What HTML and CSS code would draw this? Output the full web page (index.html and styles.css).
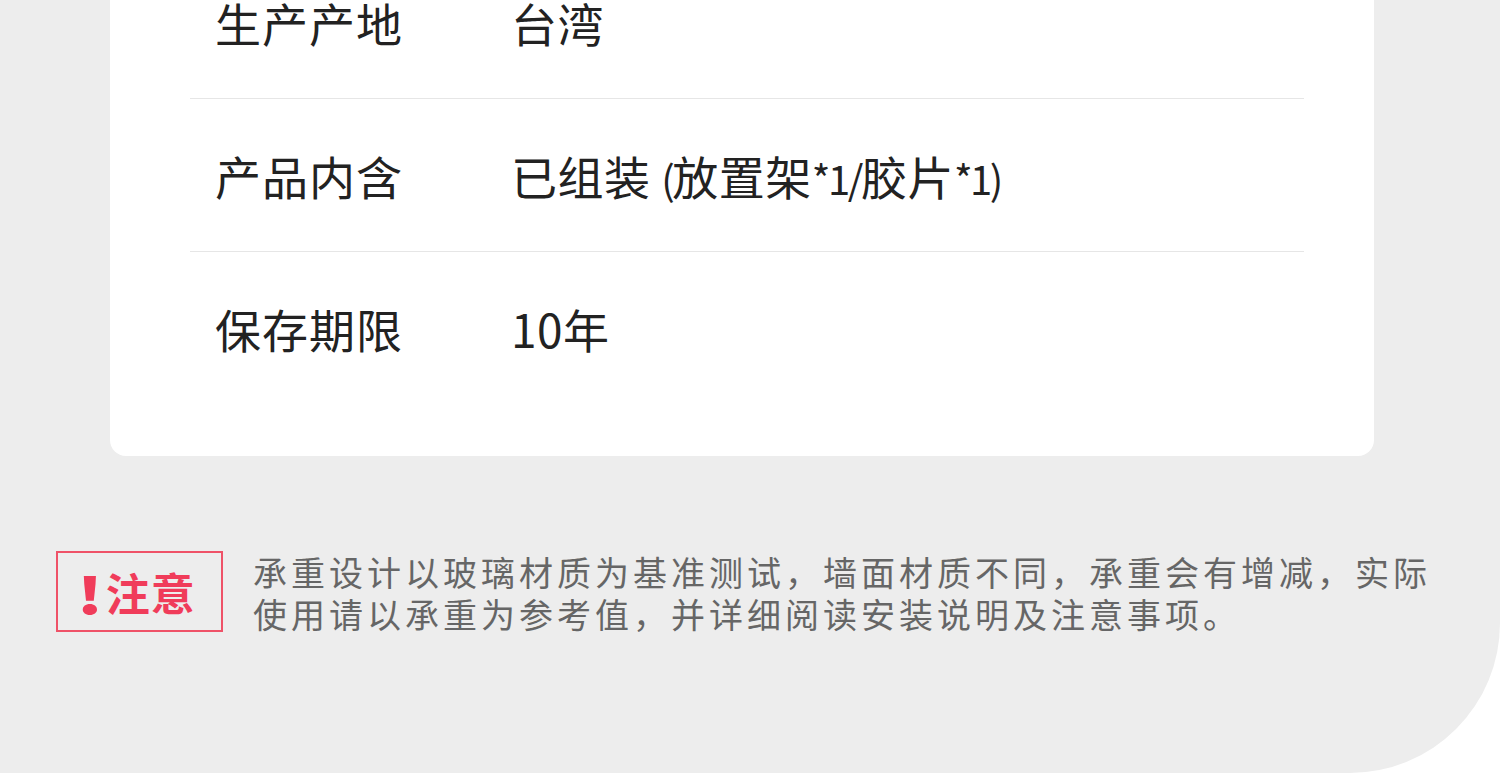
FILE: index.html
```html
<!DOCTYPE html>
<html lang="zh-CN">
<head>
<meta charset="utf-8">
<title>产品参数</title>
<link rel="stylesheet" href="styles.css">
</head>
<body>
<div class="page">
  <div class="card">
    <div class="row"><span class="label">生产产地</span><span class="value">台湾</span></div>
    <div class="row"><span class="label">产品内含</span><span class="value">已组装 <span class="lat">(</span>放置架<span class="lat">*1/</span>胶片<span class="lat">*1)</span></span></div>
    <div class="row"><span class="label">保存期限</span><span class="value">10年</span></div>
  </div>
  <div class="notice">
    <div class="badge"><span class="bang">!</span><span class="badge-text">注意</span></div>
    <p class="notice-text">承重设计以玻璃材质为基准测试，墙面材质不同，承重会有增减，实际使用请以承重为参考值，并详细阅读安装说明及注意事项。</p>
  </div>
</div>
</body>
</html>
```
FILE: styles.css
```css
html, body {
  margin: 0;
  padding: 0;
  background: #ffffff;
  overflow: hidden;
}
body {
  font-family: "Noto Sans CJK SC", "Noto Sans", sans-serif;
}
.page {
  width: 1500px;
  height: 773px;
  background: #ededed;
  border-bottom-right-radius: 150px;
  overflow: hidden;
  display: flex;
  flex-direction: column;
}
.card {
  margin: -54px 126px 0 110px;
  padding: 0 70px 52px 80px;
  background: #ffffff;
  border-radius: 0 0 16px 16px;
  display: flex;
  flex-direction: column;
}
.row {
  height: 152px;
  display: flex;
  align-items: center;
  padding-left: 25px;
  border-bottom: 1px solid #e6e6e6;
  color: #222222;
  font-size: 46px;
  line-height: 1;
}
.row:last-child {
  border-bottom: none;
}
.label {
  width: 296px;
  flex: none;
  letter-spacing: 1px;
}
.value {
  letter-spacing: 0.5px;
}
.lat {
  font-size: 40px;
  letter-spacing: -2.5px;
}
.notice {
  margin-top: 95px;
  padding: 0 57px 0 56px;
  display: flex;
  align-items: flex-start;
  gap: 30px;
}
.badge {
  flex: none;
  box-sizing: border-box;
  width: 167px;
  height: 81px;
  border: 2px solid #ef5268;
  color: #f03c5a;
  display: flex;
  align-items: center;
  padding-left: 22px;
  font-weight: 700;
}
.bang {
  font-size: 50px;
  line-height: 1;
  font-weight: 900;
  margin-right: 6px;
  transform: scaleX(1.35);
}
.badge-text {
  font-size: 44px;
  line-height: 1;
  letter-spacing: 1px;
}
.notice-text {
  margin: 0;
  color: #666666;
  font-size: 34px;
  line-height: 42px;
  letter-spacing: 4px;
}
```
